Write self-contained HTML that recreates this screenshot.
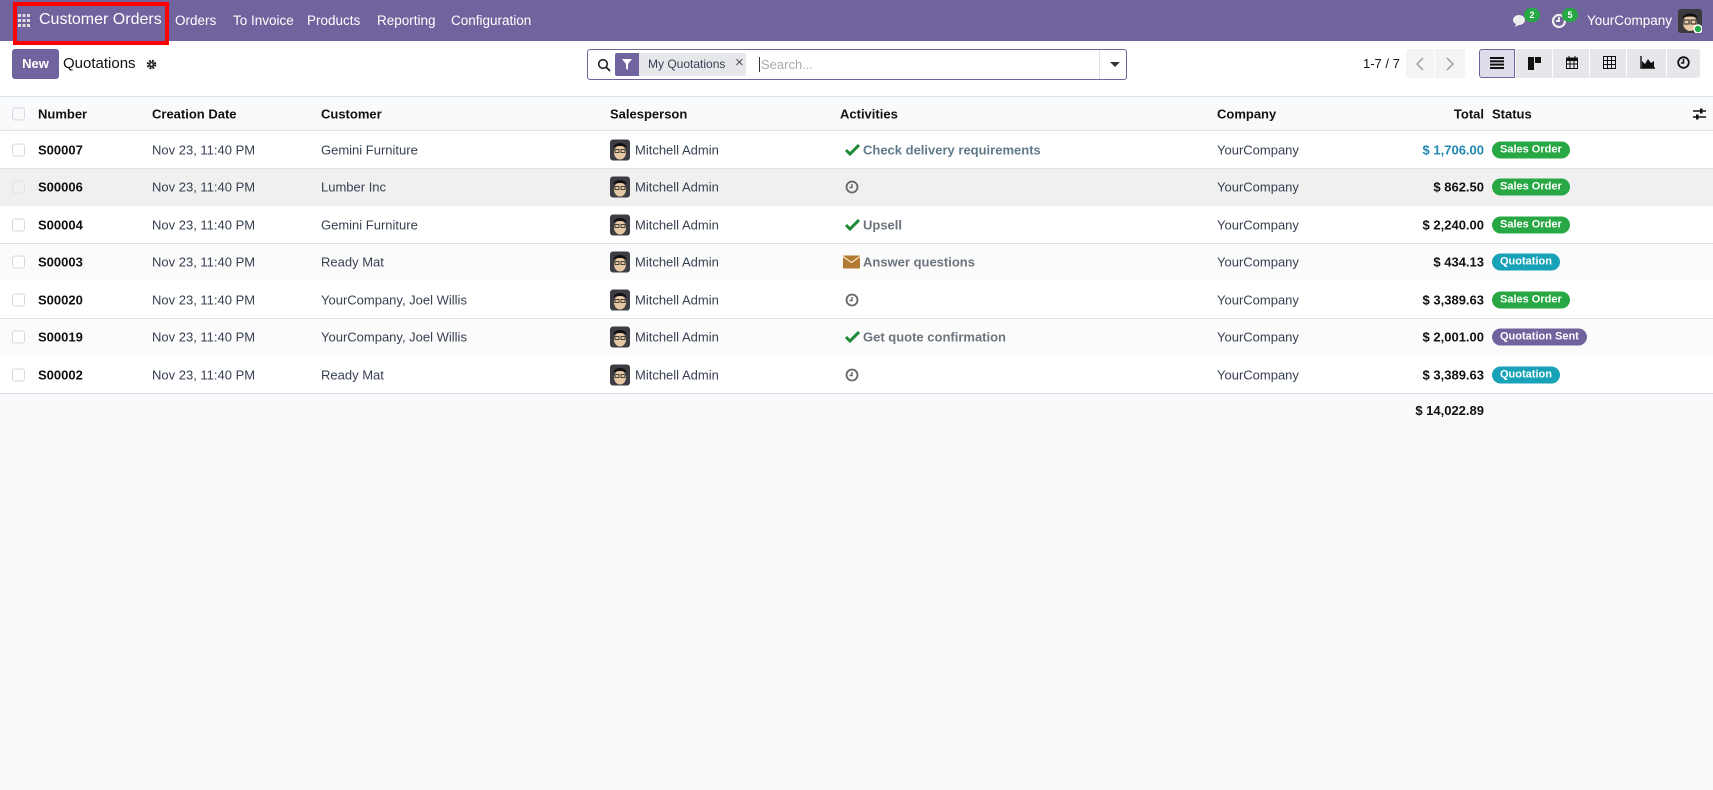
<!DOCTYPE html>
<html><head><meta charset="utf-8"><style>
*{box-sizing:border-box;margin:0;padding:0}
body{width:1713px;height:790px;background:#f9fafb;font-family:"Liberation Sans",sans-serif;font-size:13px;color:#374151;position:relative;overflow:hidden}
.a{position:absolute}
.nav{left:0;top:0;width:1713px;height:41px;background:#71639e;color:#fff}
.nav span{position:absolute;top:13px;font-size:13.5px}
.ctrl{left:0;top:41px;width:1713px;height:55px;background:#fff}
.hdr{left:0;top:96px;width:1713px;height:35px;background:#f9fafb;border-top:1px solid #dee2e6;border-bottom:1px solid #dee2e6;font-weight:bold;color:#111}
.row{left:0;width:1713px;height:38px;background:#fff;border-bottom:1px solid #dee2e6;color:#374151}
.row .a,.hdr .a{top:50%;transform:translateY(-50%);white-space:nowrap}
.cb{width:13px;height:13px;border:1px solid #d5d8dc;border-radius:3px;background:#fff}
.num{font-weight:bold;color:#111}
.tot{right:229px;font-weight:bold;color:#111}
.badge{left:1492px;color:#fff;font-size:11px;font-weight:bold;border-radius:9px;padding:2px 8px;line-height:13px}
.so{background:#28a745}.qu{background:#17a2b8}.qs{background:#71639e}
.act{font-weight:bold;color:#6c757d}
.vb{top:49px;height:29px;background:#e5e7eb;border-right:1px solid #fff}
</style></head><body>
<div class="a nav">
 <svg class="a" style="left:18px;top:14px" width="12" height="13" viewBox="0 0 12 13" fill="#ddd"><rect x="0" y="0" width="3" height="3"/><rect x="4.5" y="0" width="3" height="3"/><rect x="9" y="0" width="3" height="3"/><rect x="0" y="5" width="3" height="3"/><rect x="4.5" y="5" width="3" height="3"/><rect x="9" y="5" width="3" height="3"/><rect x="0" y="10" width="3" height="3"/><rect x="4.5" y="10" width="3" height="3"/><rect x="9" y="10" width="3" height="3"/></svg>
 <span style="left:39px;top:11px;font-size:16px">Customer Orders</span>
 <span style="left:175px">Orders</span>
 <span style="left:233px">To Invoice</span>
 <span style="left:307px">Products</span>
 <span style="left:377px">Reporting</span>
 <span style="left:451px">Configuration</span>
 <svg class="a" style="left:1512px;top:14px" width="17" height="14" viewBox="0 0 17 14"><path d="M1 6c0-3 3-5 6-5s6 2 6 5-3 5-6 5l-4 2 1-3C2 9 1 8 1 6z" fill="#eee"/></svg>
 <div class="a" style="left:1524px;top:8px;width:16px;height:14px;border-radius:7px;background:#28a745;font-size:9px;font-weight:bold;text-align:center;line-height:14px">2</div>
 <svg class="a" style="left:1551px;top:13px" width="16" height="16" viewBox="0 0 16 16"><circle cx="8" cy="8" r="6" fill="none" stroke="#eee" stroke-width="2.2"/><path d="M8 4v4H5" stroke="#eee" stroke-width="2" fill="none"/></svg>
 <div class="a" style="left:1562px;top:8px;width:16px;height:14px;border-radius:7px;background:#28a745;font-size:9px;font-weight:bold;text-align:center;line-height:14px">5</div>
 <span style="left:1587px">YourCompany</span>
 <svg class="a" style="left:1678px;top:9px" width="24" height="24" viewBox="0 0 24 24"><rect width="24" height="24" rx="3" fill="#3a3a3a"/><ellipse cx="12" cy="14" rx="7" ry="8" fill="#e8c9a8"/><path d="M4 9c2-6 14-6 16 0-4-2-12-2-16 0z" fill="#111"/><rect x="6" y="11" width="5" height="4" fill="none" stroke="#222"/><rect x="13" y="11" width="5" height="4" fill="none" stroke="#222"/><circle cx="20" cy="20" r="4" fill="#28a745" stroke="#fff" stroke-width="1.5"/></svg>
</div>
<div class="a" style="left:13px;top:2px;width:156px;height:43px;border:4px solid #f00;z-index:5"></div>
<div class="a ctrl">
 <div class="a" style="left:12px;top:8px;width:47px;height:30px;background:#71639e;border-radius:3px;color:#fff;font-weight:bold;text-align:center;line-height:30px">New</div>
 <div class="a" style="left:63px;top:14px;font-size:15px;color:#111">Quotations</div>
 <svg class="a" style="left:146px;top:18px" width="11" height="11" viewBox="0 0 12 12"><circle cx="6" cy="6" r="4" fill="none" stroke="#222" stroke-width="2.5" stroke-dasharray="2 1.2"/><circle cx="6" cy="6" r="3" fill="#222"/><circle cx="6" cy="6" r="1.3" fill="#fff"/></svg>
 <div class="a" style="left:587px;top:8px;width:540px;height:31px;border:1px solid #71639e;border-radius:3px;background:#fff">
  <svg class="a" style="left:9px;top:8px" width="14" height="14" viewBox="0 0 14 14"><circle cx="6" cy="6" r="4.3" fill="none" stroke="#222" stroke-width="1.6"/><path d="M9 9l4 4" stroke="#222" stroke-width="1.8"/></svg>
  <div class="a" style="left:27px;top:3px;width:131px;height:23px;background:#e5e7eb;border-radius:2px"></div>
  <div class="a" style="left:27px;top:3px;width:24px;height:23px;background:#71639e;border-radius:2px 0 0 2px"></div>
  <svg class="a" style="left:34px;top:9px" width="10" height="11" viewBox="0 0 10 11"><path d="M0 0h10L6 5v6L4 9.5V5z" fill="#fff"/></svg>
  <div class="a" style="left:60px;top:7px;font-size:12px;color:#374151">My Quotations</div>
  <div class="a" style="left:147px;top:4px;font-size:15px;color:#555">×</div>
  <div class="a" style="left:171px;top:7px;font-size:13px;color:#aaa;border-left:1px solid #333;padding-left:1px">Search...</div>
  <div class="a" style="left:511px;top:0;width:1px;height:29px;background:#dee2e6"></div>
  <div class="a" style="left:522px;top:12px;border-left:5px solid transparent;border-right:5px solid transparent;border-top:5px solid #333"></div>
 </div>
 <div class="a" style="left:1363px;top:15px;color:#111">1-7 / 7</div>
 <div class="a" style="left:1406px;top:8px;width:59px;height:29px;background:#f3f4f6;border-radius:3px"></div>
 <div class="a" style="left:1434px;top:8px;width:1px;height:29px;background:#fff"></div>
 <svg class="a" style="left:1415px;top:16px" width="10" height="14" viewBox="0 0 10 14"><path d="M8 1L2 7l6 6" fill="none" stroke="#999" stroke-width="1.4"/></svg>
 <svg class="a" style="left:1445px;top:16px" width="10" height="14" viewBox="0 0 10 14"><path d="M2 1l6 6-6 6" fill="none" stroke="#999" stroke-width="1.4"/></svg>
</div>
<div class="a vb" style="left:1479px;width:36px;background:#dcdde8;border:1px solid #71639e;border-radius:3px 0 0 3px"></div>
<div class="a vb" style="left:1516px;width:37px"></div>
<div class="a vb" style="left:1553px;width:37px"></div>
<div class="a vb" style="left:1590px;width:37px"></div>
<div class="a vb" style="left:1627px;width:40px"></div>
<div class="a vb" style="left:1667px;width:34px;border-radius:0 3px 3px 0"></div>
<svg class="a" style="left:1490px;top:57px" width="14" height="12" viewBox="0 0 14 12" fill="#111"><rect y="0" width="14" height="2"/><rect y="3.3" width="14" height="2"/><rect y="6.6" width="14" height="2"/><rect y="10" width="14" height="2"/></svg>
<svg class="a" style="left:1528px;top:57px" width="13" height="13" viewBox="0 0 13 13" fill="#111"><rect width="6" height="13"/><rect x="7" width="6" height="6"/></svg>
<svg class="a" style="left:1566px;top:56px" width="12" height="13" viewBox="0 0 12 13"><rect x="0.5" y="2" width="11" height="10.5" fill="none" stroke="#111"/><rect x="0.5" y="2" width="11" height="3" fill="#111"/><path d="M3 0v3M9 0v3M0 8h12M4 5v8M8 5v8" stroke="#111"/></svg>
<svg class="a" style="left:1603px;top:56px" width="13" height="13" viewBox="0 0 13 13"><rect x="0.5" y="0.5" width="12" height="12" fill="none" stroke="#111"/><path d="M0 4.5h13M0 8.5h13M4.5 0v13M8.5 0v13" stroke="#111"/></svg>
<svg class="a" style="left:1640px;top:56px" width="15" height="13" viewBox="0 0 15 13"><path d="M1 0v12h14" stroke="#111" fill="none" stroke-width="1.4"/><path d="M2 12V5l3 3 3-5 3 4 3-2v7z" fill="#111"/></svg>
<svg class="a" style="left:1677px;top:56px" width="13" height="13" viewBox="0 0 13 13"><circle cx="6.5" cy="6.5" r="5.3" fill="none" stroke="#111" stroke-width="1.8"/><path d="M6.5 3v4H4" stroke="#111" stroke-width="1.5" fill="none"/></svg>

<div class="a hdr">
 <div class="a cb" style="left:12px;background:#f9fafb"></div>
 <div class="a" style="left:38px">Number</div>
 <div class="a" style="left:152px">Creation Date</div>
 <div class="a" style="left:321px">Customer</div>
 <div class="a" style="left:610px">Salesperson</div>
 <div class="a" style="left:840px">Activities</div>
 <div class="a" style="left:1217px">Company</div>
 <div class="a" style="right:229px">Total</div>
 <div class="a" style="left:1492px">Status</div>
 <svg class="a" style="left:1693px" width="13" height="12" viewBox="0 0 13 12"><path d="M0 3h13M0 9h13" stroke="#111" stroke-width="1.5"/><rect x="7" y="0.5" width="2.5" height="5" fill="#111"/><rect x="3" y="6.5" width="2.5" height="5" fill="#111"/></svg>
</div>

<div class="a row" style="top:131px">
 <div class="a cb" style="left:12px"></div><div class="a num" style="left:38px">S00007</div><div class="a" style="left:152px">Nov 23, 11:40 PM</div><div class="a" style="left:321px">Gemini Furniture</div>
 <svg class="a" style="left:610px" width="20" height="21" viewBox="0 0 20 21"><rect width="20" height="21" rx="3" fill="#3d3d44"/><ellipse cx="10" cy="13" rx="6" ry="7" fill="#e6c7a3"/><path d="M3 8c2-6 12-6 14 0-4-2-10-2-14 0z" fill="#111"/><rect x="5" y="10" width="4" height="3" fill="none" stroke="#222" stroke-width=".8"/><rect x="11" y="10" width="4" height="3" fill="none" stroke="#222" stroke-width=".8"/></svg>
 <div class="a" style="left:635px">Mitchell Admin</div>
 <svg class="a" style="left:845px" width="15" height="12" viewBox="0 0 15 12"><path d="M1 6l4 4 9-9" fill="none" stroke="#1e8a35" stroke-width="3"/></svg>
 <div class="a act" style="left:863px;color:#5f7a8a">Check delivery requirements</div>
 <div class="a" style="left:1217px">YourCompany</div><div class="a tot" style="color:#1f87b0">$ 1,706.00</div><div class="a badge so">Sales Order</div>
</div>
<div class="a row" style="top:168.5px;background:#f0f0f0">
 <div class="a cb" style="left:12px;background:#f0f0f0;border-color:#e3e3e3"></div><div class="a num" style="left:38px">S00006</div><div class="a" style="left:152px">Nov 23, 11:40 PM</div><div class="a" style="left:321px">Lumber Inc</div>
 <svg class="a" style="left:610px" width="20" height="21" viewBox="0 0 20 21"><rect width="20" height="21" rx="3" fill="#3d3d44"/><ellipse cx="10" cy="13" rx="6" ry="7" fill="#e6c7a3"/><path d="M3 8c2-6 12-6 14 0-4-2-10-2-14 0z" fill="#111"/><rect x="5" y="10" width="4" height="3" fill="none" stroke="#222" stroke-width=".8"/><rect x="11" y="10" width="4" height="3" fill="none" stroke="#222" stroke-width=".8"/></svg>
 <div class="a" style="left:635px">Mitchell Admin</div>
 <svg class="a" style="left:845px" width="14" height="14" viewBox="0 0 14 14"><circle cx="7" cy="7" r="5.5" fill="none" stroke="#666" stroke-width="1.8"/><path d="M7 4v3.5H4.5" stroke="#666" stroke-width="1.4" fill="none"/></svg>
 <div class="a" style="left:1217px">YourCompany</div><div class="a tot">$ 862.50</div><div class="a badge so">Sales Order</div>
</div>
<div class="a row" style="top:206px">
 <div class="a cb" style="left:12px"></div><div class="a num" style="left:38px">S00004</div><div class="a" style="left:152px">Nov 23, 11:40 PM</div><div class="a" style="left:321px">Gemini Furniture</div>
 <svg class="a" style="left:610px" width="20" height="21" viewBox="0 0 20 21"><rect width="20" height="21" rx="3" fill="#3d3d44"/><ellipse cx="10" cy="13" rx="6" ry="7" fill="#e6c7a3"/><path d="M3 8c2-6 12-6 14 0-4-2-10-2-14 0z" fill="#111"/><rect x="5" y="10" width="4" height="3" fill="none" stroke="#222" stroke-width=".8"/><rect x="11" y="10" width="4" height="3" fill="none" stroke="#222" stroke-width=".8"/></svg>
 <div class="a" style="left:635px">Mitchell Admin</div>
 <svg class="a" style="left:845px" width="15" height="12" viewBox="0 0 15 12"><path d="M1 6l4 4 9-9" fill="none" stroke="#1e8a35" stroke-width="3"/></svg>
 <div class="a act" style="left:863px">Upsell</div>
 <div class="a" style="left:1217px">YourCompany</div><div class="a tot">$ 2,240.00</div><div class="a badge so">Sales Order</div>
</div>
<div class="a row" style="top:243.5px;background:#fbfbfc">
 <div class="a cb" style="left:12px"></div><div class="a num" style="left:38px">S00003</div><div class="a" style="left:152px">Nov 23, 11:40 PM</div><div class="a" style="left:321px">Ready Mat</div>
 <svg class="a" style="left:610px" width="20" height="21" viewBox="0 0 20 21"><rect width="20" height="21" rx="3" fill="#3d3d44"/><ellipse cx="10" cy="13" rx="6" ry="7" fill="#e6c7a3"/><path d="M3 8c2-6 12-6 14 0-4-2-10-2-14 0z" fill="#111"/><rect x="5" y="10" width="4" height="3" fill="none" stroke="#222" stroke-width=".8"/><rect x="11" y="10" width="4" height="3" fill="none" stroke="#222" stroke-width=".8"/></svg>
 <div class="a" style="left:635px">Mitchell Admin</div>
 <svg class="a" style="left:843px" width="17" height="13" viewBox="0 0 17 13"><rect width="17" height="13" rx="1" fill="#b27a32"/><path d="M0 1l8.5 6L17 1" fill="none" stroke="#f6e7cf" stroke-width="1.2"/></svg>
 <div class="a act" style="left:863px">Answer questions</div>
 <div class="a" style="left:1217px">YourCompany</div><div class="a tot">$ 434.13</div><div class="a badge qu">Quotation</div>
</div>
<div class="a row" style="top:281px">
 <div class="a cb" style="left:12px"></div><div class="a num" style="left:38px">S00020</div><div class="a" style="left:152px">Nov 23, 11:40 PM</div><div class="a" style="left:321px">YourCompany, Joel Willis</div>
 <svg class="a" style="left:610px" width="20" height="21" viewBox="0 0 20 21"><rect width="20" height="21" rx="3" fill="#3d3d44"/><ellipse cx="10" cy="13" rx="6" ry="7" fill="#e6c7a3"/><path d="M3 8c2-6 12-6 14 0-4-2-10-2-14 0z" fill="#111"/><rect x="5" y="10" width="4" height="3" fill="none" stroke="#222" stroke-width=".8"/><rect x="11" y="10" width="4" height="3" fill="none" stroke="#222" stroke-width=".8"/></svg>
 <div class="a" style="left:635px">Mitchell Admin</div>
 <svg class="a" style="left:845px" width="14" height="14" viewBox="0 0 14 14"><circle cx="7" cy="7" r="5.5" fill="none" stroke="#666" stroke-width="1.8"/><path d="M7 4v3.5H4.5" stroke="#666" stroke-width="1.4" fill="none"/></svg>
 <div class="a" style="left:1217px">YourCompany</div><div class="a tot">$ 3,389.63</div><div class="a badge so">Sales Order</div>
</div>
<div class="a row" style="top:318.5px;background:#fbfbfc">
 <div class="a cb" style="left:12px"></div><div class="a num" style="left:38px">S00019</div><div class="a" style="left:152px">Nov 23, 11:40 PM</div><div class="a" style="left:321px">YourCompany, Joel Willis</div>
 <svg class="a" style="left:610px" width="20" height="21" viewBox="0 0 20 21"><rect width="20" height="21" rx="3" fill="#3d3d44"/><ellipse cx="10" cy="13" rx="6" ry="7" fill="#e6c7a3"/><path d="M3 8c2-6 12-6 14 0-4-2-10-2-14 0z" fill="#111"/><rect x="5" y="10" width="4" height="3" fill="none" stroke="#222" stroke-width=".8"/><rect x="11" y="10" width="4" height="3" fill="none" stroke="#222" stroke-width=".8"/></svg>
 <div class="a" style="left:635px">Mitchell Admin</div>
 <svg class="a" style="left:845px" width="15" height="12" viewBox="0 0 15 12"><path d="M1 6l4 4 9-9" fill="none" stroke="#1e8a35" stroke-width="3"/></svg>
 <div class="a act" style="left:863px">Get quote confirmation</div>
 <div class="a" style="left:1217px">YourCompany</div><div class="a tot">$ 2,001.00</div><div class="a badge qs">Quotation Sent</div>
</div>
<div class="a row" style="top:356px">
 <div class="a cb" style="left:12px"></div><div class="a num" style="left:38px">S00002</div><div class="a" style="left:152px">Nov 23, 11:40 PM</div><div class="a" style="left:321px">Ready Mat</div>
 <svg class="a" style="left:610px" width="20" height="21" viewBox="0 0 20 21"><rect width="20" height="21" rx="3" fill="#3d3d44"/><ellipse cx="10" cy="13" rx="6" ry="7" fill="#e6c7a3"/><path d="M3 8c2-6 12-6 14 0-4-2-10-2-14 0z" fill="#111"/><rect x="5" y="10" width="4" height="3" fill="none" stroke="#222" stroke-width=".8"/><rect x="11" y="10" width="4" height="3" fill="none" stroke="#222" stroke-width=".8"/></svg>
 <div class="a" style="left:635px">Mitchell Admin</div>
 <svg class="a" style="left:845px" width="14" height="14" viewBox="0 0 14 14"><circle cx="7" cy="7" r="5.5" fill="none" stroke="#666" stroke-width="1.8"/><path d="M7 4v3.5H4.5" stroke="#666" stroke-width="1.4" fill="none"/></svg>
 <div class="a" style="left:1217px">YourCompany</div><div class="a tot">$ 3,389.63</div><div class="a badge qu">Quotation</div>
</div>
<div class="a" style="top:403px;right:229px;font-weight:bold;color:#111">$ 14,022.89</div>
</body></html>
